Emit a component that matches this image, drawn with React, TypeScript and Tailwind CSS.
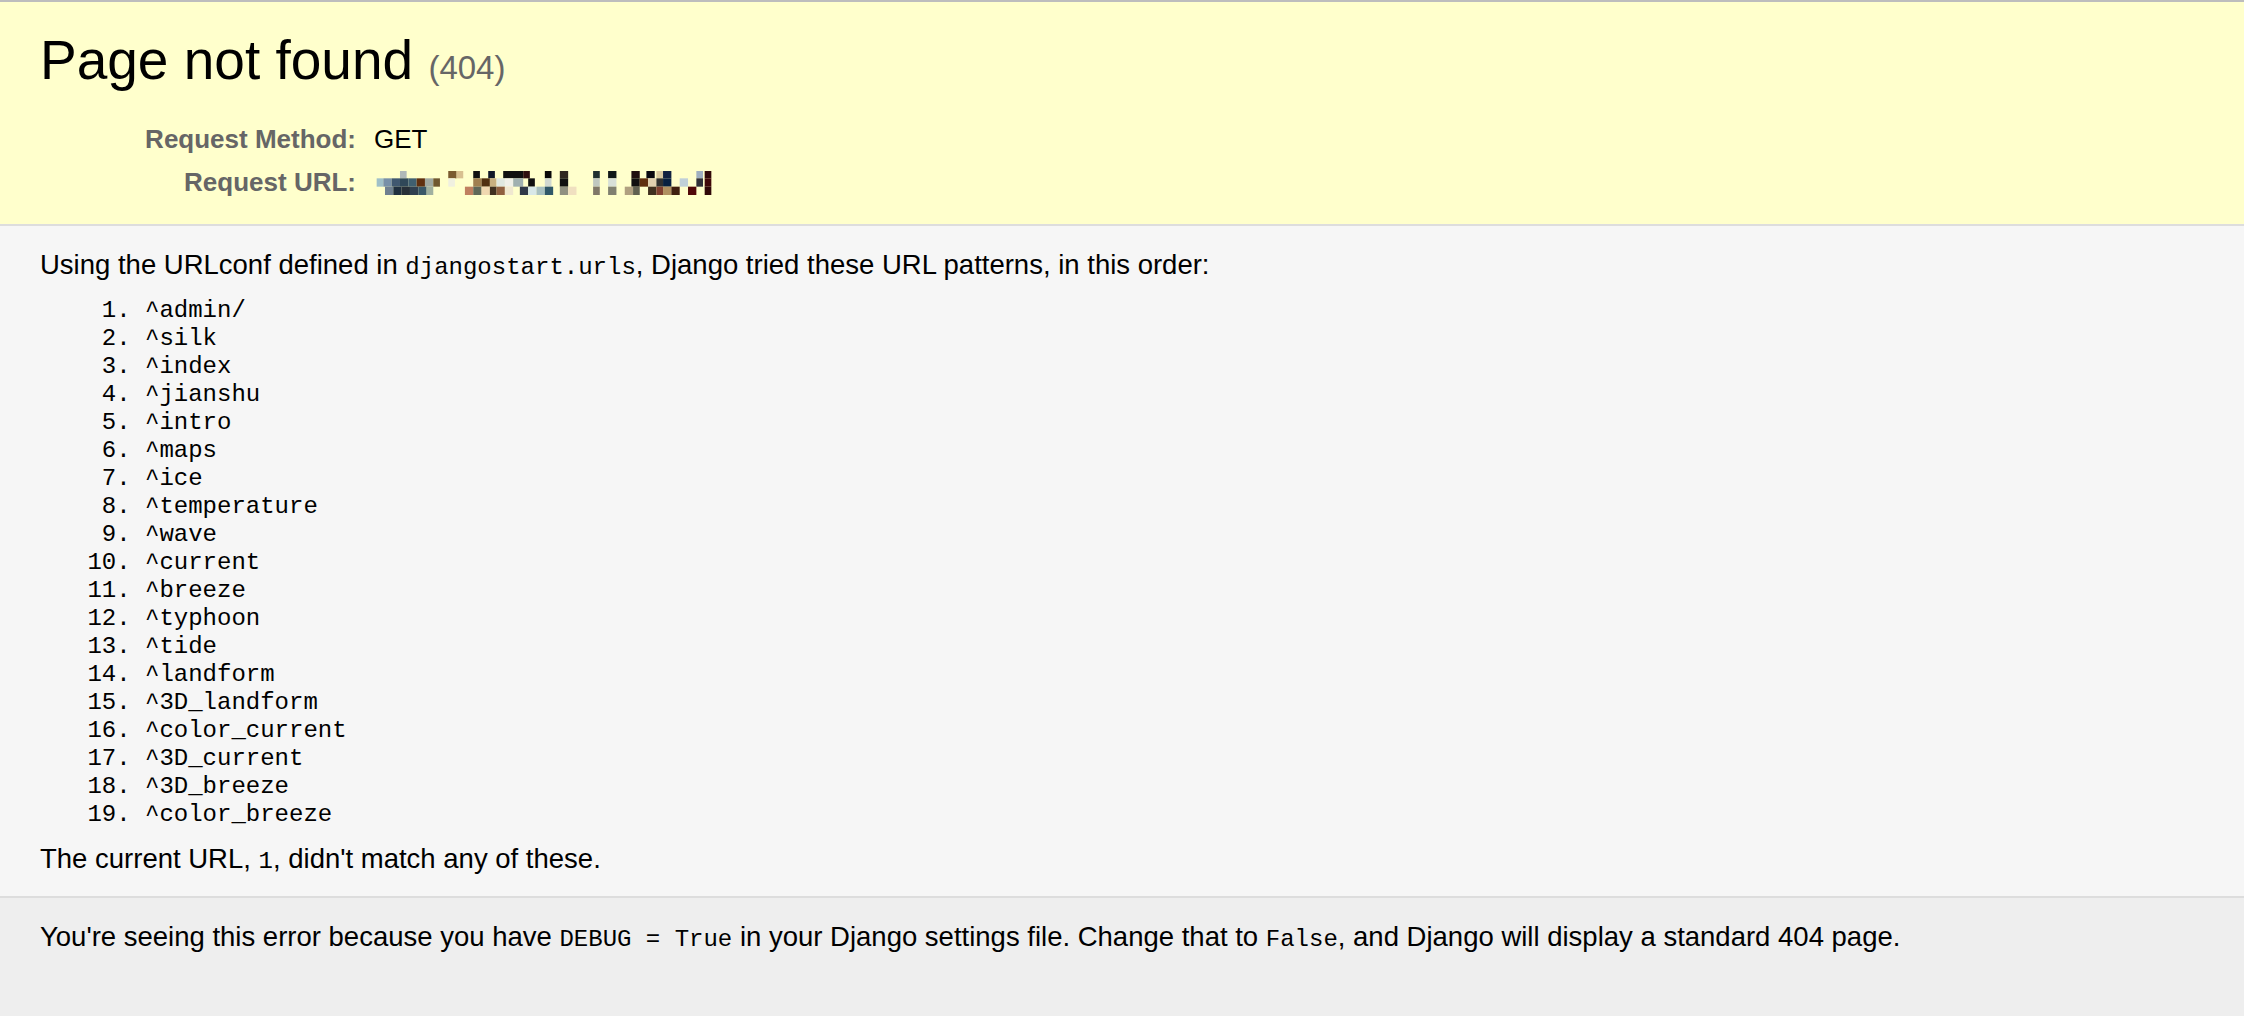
const patterns = [
  '^admin/',
  '^silk',
  '^index',
  '^jianshu',
  '^intro',
  '^maps',
  '^ice',
  '^temperature',
  '^wave',
  '^current',
  '^breeze',
  '^typhoon',
  '^tide',
  '^landform',
  '^3D_landform',
  '^color_current',
  '^3D_current',
  '^3D_breeze',
  '^color_breeze',
];

// pixelated (redacted) request url: [x, width, color] per row
const rowA: [number, number, string][] = [
  [120, 20, '#b0b8b8'], [265, 25, '#7a5a30'], [290, 20, '#d8c090'], [340, 20, '#101010'],
  [385, 20, '#101828'], [430, 60, '#101010'], [490, 20, '#301010'], [555, 20, '#080808'],
  [600, 25, '#302820'], [700, 20, '#203030'], [745, 25, '#101818'], [815, 25, '#201010'],
  [860, 25, '#080810'], [890, 20, '#d8c8a0'], [910, 25, '#102040'], [1010, 20, '#a0b0c0'],
  [1035, 20, '#300808'],
];
const rowB: [number, number, string][] = [
  [50, 20, '#a0c0c8'], [70, 25, '#7890a8'], [95, 25, '#405870'], [120, 25, '#304858'],
  [145, 25, '#406070'], [170, 25, '#603010'], [195, 25, '#a0a8a0'], [220, 20, '#705830'],
  [265, 20, '#f0f0e0'], [340, 25, '#a08050'], [365, 25, '#503010'], [390, 20, '#c8b080'],
  [410, 25, '#e0e8e0'], [435, 25, '#f0f0e8'], [460, 30, '#a0b0b0'], [505, 20, '#101010'],
  [555, 20, '#d0d8d0'], [600, 25, '#101010'], [700, 20, '#c0c8c0'], [745, 25, '#d8e0d8'],
  [815, 25, '#101010'], [840, 25, '#603010'], [865, 25, '#e0d0b0'], [890, 20, '#303030'],
  [910, 25, '#082040'], [960, 25, '#c0d0d8'], [1010, 20, '#303038'], [1035, 20, '#400808'],
];
const rowC: [number, number, string][] = [
  [75, 25, '#708090'], [100, 25, '#203040'], [125, 25, '#283038'], [150, 25, '#304050'],
  [175, 25, '#3a5868'], [200, 20, '#a0b0a0'], [315, 25, '#c08060'], [340, 25, '#606858'],
  [365, 25, '#f0d8b0'], [390, 20, '#403020'], [410, 25, '#906040'], [435, 25, '#f0e8d0'],
  [480, 25, '#303848'], [505, 25, '#d8e8e8'], [530, 25, '#a8c0c0'], [555, 25, '#305868'],
  [600, 25, '#909080'], [625, 25, '#f0e0c0'], [700, 20, '#807868'], [745, 25, '#808070'],
  [795, 25, '#b0a080'], [820, 20, '#606050'], [865, 25, '#403020'], [890, 20, '#804030'],
  [910, 25, '#b09060'], [935, 25, '#402010'], [985, 25, '#500808'], [1035, 20, '#300808'],
];

function RedactedUrl() {
  return (
    <svg width="338" height="24" viewBox="45 150 1015 72" preserveAspectRatio="none" className="block">
      {rowA.map(([x, w, c]) => (
        <rect key={'a' + x} x={x} y={150} width={w} height={22} fill={c} />
      ))}
      {rowB.map(([x, w, c]) => (
        <rect key={'b' + x} x={x} y={172} width={w} height={25} fill={c} />
      ))}
      {rowC.map(([x, w, c]) => (
        <rect key={'c' + x} x={x} y={197} width={w} height={25} fill={c} />
      ))}
    </svg>
  );
}

const mono = "font-['Liberation_Mono','Courier_New',monospace] text-[24px] leading-none";

export default function App() {
  return (
    <div className="flex min-h-screen flex-col bg-[#eee] font-['Liberation_Sans',Arial,sans-serif] text-[27.5px] text-black">
      {/* Summary */}
      <div className="border-t-2 border-b-2 border-t-[#bdbdbd] border-b-[#ddd] bg-[#ffc] px-10 pt-[28px] pb-[20px]">
        <h1 className="text-[55px] leading-[60px] font-normal">
          Page not found <span className="text-[33px] text-[#666]">(404)</span>
        </h1>
        <table className="mt-[20px] border-collapse text-[26px]">
          <tbody>
            <tr>
              <th className="w-[329px] pr-[13px] text-right align-middle font-bold leading-[43px] text-[#666]">
                Request Method:
              </th>
              <td className="pl-[5px] align-middle leading-[43px]">GET</td>
            </tr>
            <tr>
              <th className="w-[329px] pr-[13px] text-right align-middle font-bold leading-[43px] text-[#666]">
                Request URL:
              </th>
              <td className="pl-[6px] align-middle">
                <RedactedUrl />
              </td>
            </tr>
          </tbody>
        </table>
      </div>

      {/* Info */}
      <div className="border-b-2 border-[#ddd] bg-[#f6f6f6] px-10 pt-[24px] pb-[22px]">
        <p className="leading-[30px]">
          Using the URLconf defined in <code className={mono}>djangostart.urls</code>, Django tried these URL
          patterns, in this order:
        </p>
        <ol className="mt-[17px] -ml-10">
          {patterns.map((p, i) => (
            <li key={p} className="flex h-[28px] items-center font-['Liberation_Mono','Courier_New',monospace] text-[24px] leading-[28px]">
              <span className="w-[145px] shrink-0 text-right whitespace-pre">{i + 1}. </span>
              <span>{p}</span>
            </li>
          ))}
        </ol>
        <p className="mt-[15px] leading-[30px]">
          The current URL, <code className={mono}>1</code>, didn't match any of these.
        </p>
      </div>

      {/* Explanation */}
      <div className="flex-1 bg-[#eee] px-10 pt-[24px]">
        <p className="leading-[30px]">
          You're seeing this error because you have <code className={mono}>DEBUG = True</code> in your Django
          settings file. Change that to <code className={mono}>False</code>, and Django will display a standard
          404 page.
        </p>
      </div>
    </div>
  );
}
